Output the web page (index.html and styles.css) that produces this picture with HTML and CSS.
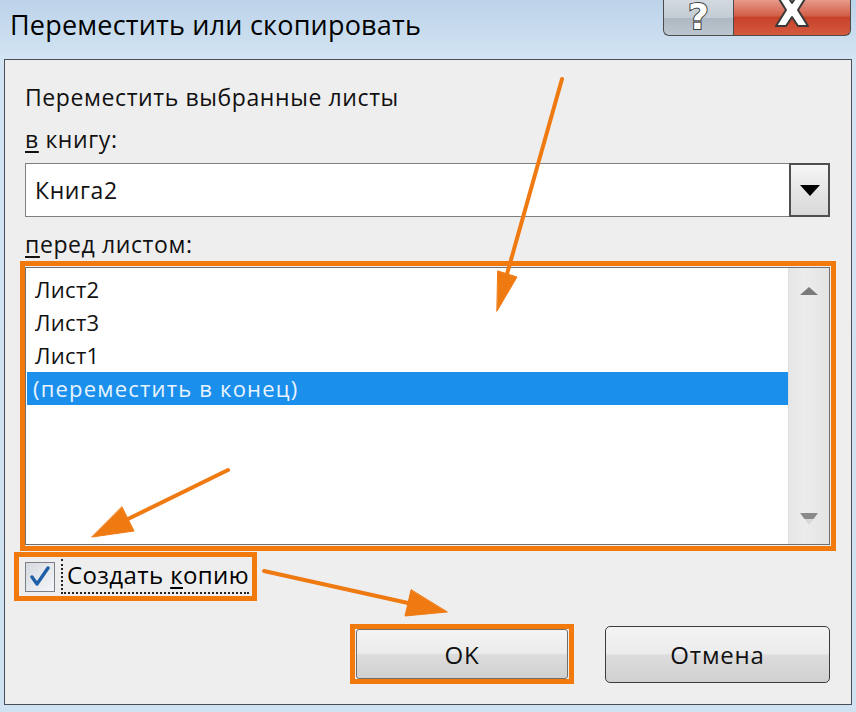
FILE: index.html
```html
<!DOCTYPE html>
<html lang="ru">
<head>
    <meta charset="UTF-8">
    <title>Переместить или скопировать</title>
    <link rel="stylesheet" href="styles.css">
</head>
<body>
<div class="window">
    <div class="titlebar">
        <span class="title">Переместить или скопировать</span>
        <div class="caption-btns">
            <div class="cap-help">?</div>
            <div class="cap-close">
                <svg width="40" height="30" viewBox="0 0 40 30">
                    <path d="M4 -6 L14 -6 L20 3 L26 -6 L36 -6 L26 10 L36 26 L26 26 L20 17 L14 26 L4 26 L14 10 Z" fill="#fff" stroke="#3a3a3a" stroke-width="2" stroke-linejoin="round"/>
                </svg>
            </div>
        </div>
    </div>
    <div class="panel">
        <div class="label first">Переместить выбранные листы</div>
        <div class="label"><u>в</u> книгу:</div>
        <div class="combo">
            <span class="combo-text">Книга2</span>
            <span class="combo-btn"><i class="tri-down"></i></span>
        </div>
        <div class="label"><u>п</u>еред листом:</div>
        <div class="mark list-mark">
            <div class="listbox">
                <ul class="items">
                    <li>Лист2</li>
                    <li>Лист3</li>
                    <li>Лист1</li>
                    <li class="selected">(переместить в конец)</li>
                </ul>
                <div class="scrollbar">
                    <i class="arr-up"></i>
                    <i class="arr-down"></i>
                </div>
            </div>
        </div>
        <div class="check-row">
            <div class="mark check-mark">
                <span class="checkbox">
                    <svg width="22" height="22" viewBox="0 0 22 22">
                        <path d="M3 11 L8 18 L19 2" fill="none" stroke="#1f5fa8" stroke-width="3.4" stroke-linecap="round" stroke-linejoin="round"/>
                    </svg>
                </span>
                <span class="check-label">Создать <u>к</u>опию</span>
            </div>
        </div>
        <div class="buttons">
            <div class="mark ok-mark"><button class="btn">OK</button></div>
            <button class="btn cancel">Отмена</button>
        </div>
    </div>
    <svg class="arrows" width="856" height="712" viewBox="0 0 856 712">
        <g stroke="#f07a12" stroke-width="4" stroke-linecap="round" fill="#f07a12">
            <line x1="562" y1="79" x2="507" y2="274"/>
            <polygon points="497,311 517,277 498,271" stroke-width="1"/>
            <line x1="228" y1="470" x2="128" y2="519"/>
            <polygon points="92,537 134,531 122,507" stroke-width="1"/>
            <line x1="264" y1="571" x2="408" y2="603"/>
            <polygon points="447,612 405,616 411,590" stroke-width="1"/>
        </g>
    </svg>
</div>
</body>
</html>
```

FILE: styles.css
```css
body{
    margin: 0;
    font-family: "Open Sans", "Noto Sans", sans-serif;
    color: #111;
}
.window{
    position: relative;
    width: 856px;
    height: 712px;
    background: linear-gradient(#bcd3e9, #d3e4f3 60px, #cfe2f2);
    padding: 0 4px;
    box-sizing: border-box;
    overflow: hidden;
}
.titlebar{
    height: 59px;
    display: flex;
    justify-content: space-between;
    align-items: flex-start;
}
.title{
    font-size: 27px;
    line-height: 27px;
    letter-spacing: 0.2px;
    margin: 11px 0 0 6px;
    color: #000;
}
.caption-btns{
    display: flex;
    margin-right: 1px;
}
.cap-help,.cap-close{
    height: 36px;
    box-sizing: border-box;
    border: 1px solid #4b4b4b;
    border-top: none;
    display: flex;
    justify-content: center;
    overflow: hidden;
}
.cap-help{
    width: 70px;
    border-radius: 0 0 0 6px;
    border-right: none;
    background: linear-gradient(#d3d9df, #c3ccd5 50%, #aeb8c3 51%, #bcc6cf);
    color: #fff;
    font: bold 36px/34px "DejaVu Sans", sans-serif;
    -webkit-text-stroke: 2px #3d3d3d;
    paint-order: stroke fill;
}
.cap-close{
    width: 118px;
    border-radius: 0 0 6px 0;
    background: linear-gradient(#e79a8a, #d25f48 45%, #c7412b 50%, #d45a3e);
    align-items: flex-start;
}
.panel{
    height: 646px;
    box-sizing: border-box;
    border: 1px solid #4a4f57;
    background: #efeeee;
    padding: 22px 21px 0 20px;
    display: flex;
    flex-direction: column;
}
.label{
    font-size: 23px;
    letter-spacing: 0.6px;
    line-height: 30px;
    margin-top: 12px;
}
.label.first{
    margin-top: 0;
}
.label u,.check-label u{
    text-decoration-thickness: 2px;
    text-underline-offset: 3px;
}
.combo{
    margin-top: 9px;
    height: 54px;
    box-sizing: border-box;
    border: 1px solid #7f7f7f;
    border-right: none;
    background: #fff;
    display: flex;
    justify-content: space-between;
}
.combo-text{
    font-size: 23px;
    letter-spacing: 0.6px;
    line-height: 52px;
    padding-left: 9px;
}
.combo-btn{
    width: 41px;
    box-sizing: border-box;
    margin: -1px 0;
    border: 2px solid #4f4f4f;
    background: linear-gradient(#f6f6f6, #e3e3e3 60%, #d9d9d9);
    display: flex;
    align-items: center;
    justify-content: center;
}
.tri-down{
    border-left: 10px solid transparent;
    border-right: 10px solid transparent;
    border-top: 11px solid #000;
}
.mark{
    border: 5px solid #f27a0c;
}
.list-mark{
    margin: 2px -6px 0 -5px;
    padding: 1px 1px 1px 0;
}
.listbox{
    height: 278px;
    box-sizing: border-box;
    border: 1px solid #6f6f6f;
    background: #fff;
    display: flex;
}
.items{
    flex: 1;
    list-style: none;
    margin: 0;
    padding: 5px 0 0 1px;
}
.items li{
    height: 33px;
    line-height: 33px;
    font-size: 22px;
    letter-spacing: 0.3px;
    padding-left: 8px;
}
.items li.selected{
    background: #1a8fec;
    color: #e9f4ff;
    letter-spacing: 1.2px;
    padding-left: 6px;
}
.scrollbar{
    width: 40px;
    background: linear-gradient(90deg, #e6e6e6, #ececec 40%, #e3e3e3);
    border-left: 1px solid #dcdcdc;
    display: flex;
    flex-direction: column;
    justify-content: space-between;
    align-items: center;
    padding: 19px 0 19px 0;
}
.arr-up{
    border-left: 9px solid transparent;
    border-right: 9px solid transparent;
    border-bottom: 8px solid #7a7a7a;
}
.arr-down{
    width: 12px;
    height: 6px;
    border-left: 3px solid transparent;
    border-right: 3px solid transparent;
    border-top: 6px solid #8a8a8a;
    box-sizing: content-box;
    clip-path: polygon(0 0, 100% 0, 50% 100%);
    background: #d8d8d8;
}
.check-row{
    display: flex;
    margin: 1px 0 0 -11px;
}
.check-mark{
    display: flex;
    align-items: center;
    padding: 2px 3px 2px 6px;
    height: 49px;
    box-sizing: border-box;
}
.checkbox{
    width: 30px;
    height: 30px;
    box-sizing: border-box;
    border: 1px solid #7b8088;
    background: linear-gradient(135deg, #d6dbe1, #f4f5f7);
    display: flex;
    align-items: center;
    justify-content: center;
}
.check-label{
    margin-left: 6px;
    font-size: 24px;
    letter-spacing: 0.4px;
    line-height: 32px;
    padding: 0 0 1px 4px;
    border-left: 2px dotted #222;
    border-bottom: 2px dotted #222;
    color: #000;
}
.buttons{
    display: flex;
    justify-content: flex-end;
    align-items: center;
    gap: 31px;
    margin-top: 23px;
}
.ok-mark{
    padding: 0 1px 0 1px;
    display: flex;
}
.btn{
    width: 212px;
    height: 50px;
    border: 1px solid #6e6e6e;
    border-radius: 3px;
    background: linear-gradient(#f3f3f3, #ececec 48%, #dcdcdc 52%, #d0d0d0);
    font-family: "Open Sans", "Noto Sans", sans-serif;
    font-size: 24px;
    letter-spacing: 0.8px;
    color: #111;
    padding: 0;
}
.btn.cancel{
    width: 225px;
    height: 57px;
    border-color: #3c3c3c;
    border-radius: 5px;
}
.arrows{
    position: absolute;
    left: 0;
    top: 0;
    pointer-events: none;
}
```
